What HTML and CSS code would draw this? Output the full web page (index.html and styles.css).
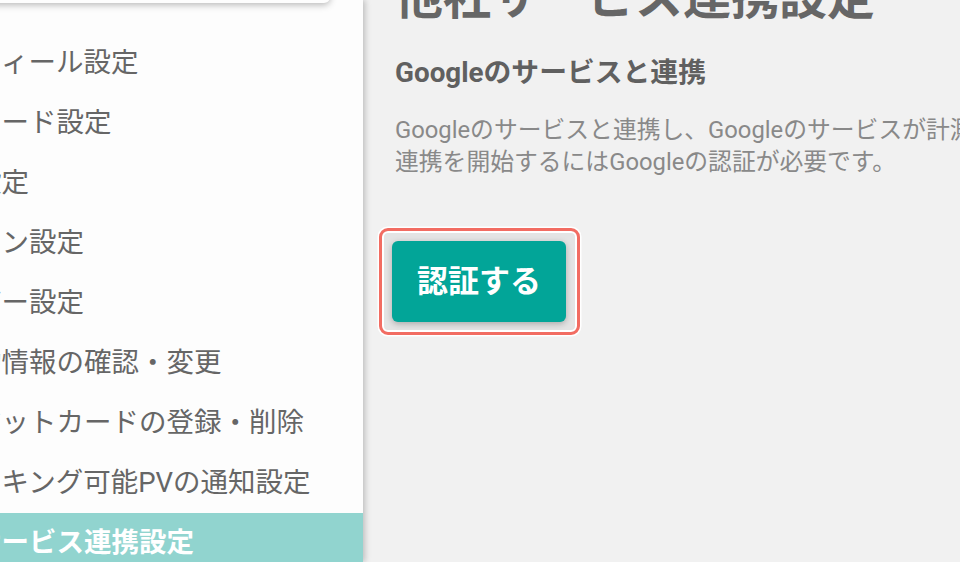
FILE: index.html
```
<!DOCTYPE html>
<html lang="ja">
<head>
<meta charset="utf-8">
<title>他社サービス連携設定</title>
<link rel="stylesheet" href="styles.css">
</head>
<body>
<aside class="sidebar">
  <div class="sidebar-card"></div>
  <ul class="menu">
    <li class="menu-item">プロフィール設定</li>
    <li class="menu-item">パスワード設定</li>
    <li class="menu-item">基本設定</li>
    <li class="menu-item">ドメイン設定</li>
    <li class="menu-item">メンバー設定</li>
    <li class="menu-item">ご契約情報の確認・変更</li>
    <li class="menu-item">クレジットカードの登録・削除</li>
    <li class="menu-item">総ランキング可能PVの通知設定</li>
    <li class="menu-item is-active">他社サービス連携設定</li>
  </ul>
</aside>
<main class="main">
  <h1 class="title">他社サービス連携設定</h1>
  <h2 class="subtitle">Googleのサービスと連携</h2>
  <p class="desc"><span class="desc-line">Googleのサービスと連携し、Googleのサービスが計測したデータを取得します。</span><br>連携を開始するにはGoogleの認証が必要です。</p>
  <div class="btn-wrap">
    <button class="btn-auth" type="button">認証する</button>
  </div>
</main>
</body>
</html>
```
FILE: styles.css
```
html, body {
  margin: 0;
  padding: 0;
  height: 100%;
}
body {
  display: flex;
  overflow: hidden;
  background: #f1f1f1;
  font-family: Roboto, "Noto Sans CJK JP", sans-serif;
  color: #666;
}
.sidebar {
  position: relative;
  z-index: 1;
  flex: 0 0 483px;
  margin-left: -120px;
  background: #fdfdfd;
  box-shadow: 2px 0 6px rgba(0, 0, 0, 0.22);
}
.sidebar-card {
  height: 20px;
  margin-top: -17px;
  margin-right: 33px;
  background: #fdfdfd;
  border-radius: 0 0 6px 6px;
  box-shadow: 0 2px 7px rgba(0, 0, 0, 0.28);
}
.menu {
  list-style: none;
  margin: 30px 0 0;
  padding: 0;
}
.menu-item {
  height: 60px;
  line-height: 60px;
  padding-left: 39px;
  font-size: 27.5px;
  color: #666;
  white-space: nowrap;
}
.menu-item.is-active {
  background: #91d4cf;
  color: #fff;
  font-weight: 700;
}
.main {
  flex: 1;
  min-width: 0;
  padding-left: 32px;
  display: flex;
  flex-direction: column;
  align-items: flex-start;
}
.title {
  margin: -26px 0 0;
  font-size: 48px;
  line-height: 48px;
  font-weight: 700;
  color: #666;
  white-space: nowrap;
}
.subtitle {
  margin: 35px 0 0;
  font-size: 27.8px;
  line-height: 32px;
  font-weight: 700;
  color: #606060;
  white-space: nowrap;
}
.desc {
  margin: 25px 0 0;
  font-size: 23.8px;
  line-height: 32px;
  color: #898989;
  white-space: nowrap;
}
.btn-wrap {
  margin: 50px 0 0 -16px;
  padding: 10px 11px 10px 10px;
  border: 3.5px solid #f26c62;
  border-radius: 9px;
  background: #e4e4e4;
  box-shadow: 0 0 0 1.5px #fff, inset 0 0 0 2px #fff;
}
.btn-auth {
  display: block;
  width: 174px;
  height: 81px;
  border: none;
  border-radius: 6px;
  background: #02a598;
  color: #fff;
  font-family: Roboto, "Noto Sans CJK JP", sans-serif;
  font-size: 31px;
  font-weight: 700;
  box-shadow: 0 2px 6px rgba(0, 0, 0, 0.25);
  padding: 0 0 6px;
}
```
